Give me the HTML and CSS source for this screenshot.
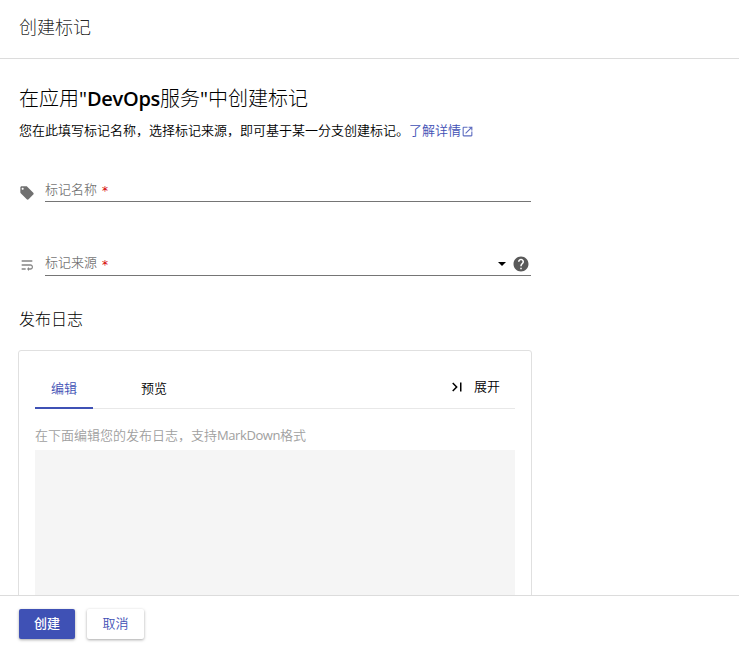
FILE: index.html
```html
<!DOCTYPE html>
<html lang="zh-CN">
<head>
<meta charset="utf-8">
<title>创建标记</title>
<link rel="stylesheet" href="styles.css">
</head>
<body>
<div class="sidebar">
  <header class="header">创建标记</header>
  <main class="content">
    <h2 class="title">在应用<span class="quote">"</span><span class="title-latin">DevOps</span>服务<span class="quote">"</span>中创建标记</h2>
    <p class="desc"><span>您在此填写标记名称，选择标记来源，即可基于某一分支创建标记。</span><a class="link">了解详情<svg class="icon-open" viewBox="0 0 24 24"><path d="M19 19H5V5h7V3H5a2 2 0 0 0-2 2v14a2 2 0 0 0 2 2h14c1.100 0 2-.9 2-2v-7h-2v7zM14 3v2h3.590l-9.830 9.830 1.410 1.410L19 6.410V10h2V3h-7z"/></svg></a></p>
    <div class="field">
      <svg class="field-icon" viewBox="0 0 24 24"><path d="M21.410 11.580l-9-9C12.050 2.220 11.550 2 11 2H4c-1.100 0-2 .9-2 2v7c0 .55.220 1.050.590 1.420l9 9c.360.360.860.580 1.410.580.550 0 1.050-.220 1.410-.590l7-7c.370-.360.590-.860.590-1.410 0-.550-.230-1.060-.590-1.420zM5.500 7C4.670 7 4 6.330 4 5.500S4.670 4 5.500 4 7 4.670 7 5.500 6.330 7 5.500 7z"/></svg>
      <div class="field-box"><span class="label">标记名称</span><span class="star">*</span></div>
    </div>
    <div class="field field-source">
      <svg class="field-icon wrap-icon" viewBox="0 0 24 24"><path d="M4 19h6v-2H4v2zM20 5H4v2h16V5zm-3 6H4v2h13.250c1.100 0 2 .9 2 2s-.9 2-2 2H15v-2l-3 3 3 3v-2h2c2.210 0 4-1.790 4-4s-1.790-4-4-4z"/></svg>
      <div class="field-box"><span class="label">标记来源</span><span class="star">*</span><span class="caret"></span>
        <svg class="icon-help" viewBox="0 0 24 24"><path d="M12 2C6.480 2 2 6.480 2 12s4.480 10 10 10 10-4.480 10-10S17.520 2 12 2zm1 17h-2v-2h2v2zm2.070-7.750l-.9.920C13.450 12.900 13 13.500 13 15h-2v-.5c0-1.100.450-2.100 1.170-2.830l1.240-1.260c.370-.360.590-.860.590-1.410 0-1.100-.9-2-2-2s-2 .9-2 2H8c0-2.210 1.790-4 4-4s4 1.790 4 4c0 .88-.36 1.680-.93 2.250z"/></svg>
      </div>
    </div>
    <h3 class="log-title">发布日志</h3>
    <section class="card">
      <nav class="tabs">
        <span class="tab active">编辑</span><span class="tab preview">预览</span>
        <span class="expand"><svg class="icon-expand" viewBox="0 0 24 24"><path d="M5.590 7.410L10.180 12l-4.590 4.590L7 18l6-6-6-6zM16 6h2v12h-2z"/></svg>展开</span>
      </nav>
      <p class="tip">在下面编辑您的发布日志，支持<span class="tip-latin">MarkDown</span>格式</p>
      <div class="editor"></div>
    </section>
  </main>
  <footer class="footer">
    <button class="btn primary">创建</button>
    <button class="btn">取消</button>
  </footer>
</div>
</body>
</html>
```
FILE: styles.css
```css
* { box-sizing: border-box; }
body {
  margin: 0;
  background: #fff;
  color: #000;
  font: 13px/20px "Open Sans", "Noto Sans CJK SC", sans-serif;
  font-weight: 350;
}
h2, h3, p { margin: 0; font-weight: 350; }
svg { fill: currentColor; flex: none; }
.sidebar { height: 647px; display: flex; flex-direction: column; overflow: hidden; }
.header {
  height: 59px;
  flex: none;
  padding: 0 19px;
  border-bottom: 1px solid #dcdcdc;
  font-size: 18px;
  font-weight: 300;
  line-height: 54px;
  color: rgba(0, 0, 0, .87);
}
.content { flex: 1; min-height: 0; overflow: hidden; padding: 26px 0 0 18px; }
.title { padding-left: 1px; font-size: 20px; font-weight: 300; line-height: 28px; white-space: nowrap; }
.title-latin { font-weight: 550; letter-spacing: -.3px; }
.quote { font-weight: 500; }
.desc { display: flex; margin-top: 7px; padding-left: 1px; white-space: nowrap; }
.link { display: flex; align-items: center; color: #3f51b5; }
.icon-open { width: 13px; height: 13px; margin-top: 3px; opacity: .85; }
.field { display: flex; width: 513px; height: 24px; margin-top: 38px; color: rgba(0, 0, 0, .56); }
.field-source { margin-top: 50px; }
.field-icon { width: 16px; height: 16px; margin: 7px 10px 0 1px; }
.wrap-icon { margin-top: 5px; opacity: .85; }
.field-box {
  flex: 1;
  display: flex;
  align-items: center;
  border-bottom: 1px solid #757575;
}
.label { margin-top: -2px; }
.field-source .label { margin-top: -3px; }
.star { margin: 2px 0 0 5px; color: #d50000; font: 12px/20px "DejaVu Sans", sans-serif; }
.caret { margin-left: auto; border: 4px solid transparent; border-top-color: #000; border-bottom: 0; }
.icon-help { width: 18px; height: 18px; margin: 1px 1px 0 6px; color: #595959; }
.log-title { margin-top: 32px; padding-left: 1px; font-size: 16px; font-weight: 300; line-height: 23px; }
.card {
  width: 514px;
  height: 320px;
  margin-top: 19px;
  padding: 18px 16px 0;
  border: 1px solid #e0e0e0;
  border-radius: 3px;
}
.tabs { display: flex; height: 40px; border-bottom: 1px solid #e8e8e8; }
.tab { height: 40px; padding: 0 16px; line-height: 39px; }
.active { border-bottom: 2px solid #3f51b5; color: #3f51b5; }
.preview { margin-left: 32px; }
.expand { display: flex; align-items: center; margin: 0 15px 5px auto; }
.icon-expand { width: 18px; height: 18px; margin: 2px 8px 0 0; }
.tip { margin-top: 16px; color: #a0a0a0; white-space: nowrap; }
.tip-latin { font-weight: 400; letter-spacing: -.42px; }
.editor { height: 240px; margin-top: 5px; background: #f5f5f5; }
.footer {
  height: 52px;
  flex: none;
  display: flex;
  gap: 12px;
  padding: 13px 19px;
  border-top: 1px solid #dcdcdc;
  background: #fff;
}
.btn {
  width: 57px;
  height: 30px;
  padding: 0 0 2px;
  border: 0;
  border-radius: 2px;
  background: #fff;
  color: #3f51b5;
  font: inherit;
  box-shadow: 0 1px 3px rgba(0, 0, 0, .35);
}
.primary { width: 56px; background: #3f51b5; color: #fff; font-weight: 500; }
```
